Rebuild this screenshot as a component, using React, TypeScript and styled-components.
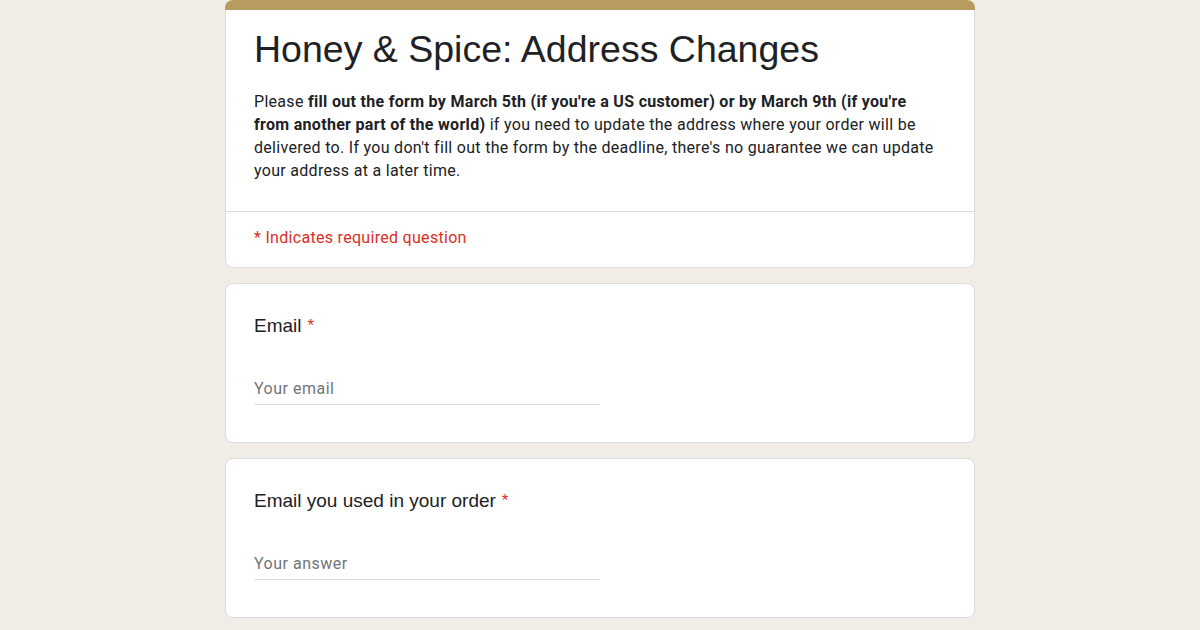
import React from "react";
import styled, { createGlobalStyle } from "styled-components";

const Global = createGlobalStyle`
  html, body { margin: 0; padding: 0; }
  body {
    background: #f1ede6;
    font-family: Roboto, "Liberation Sans", Arial, sans-serif;
    -webkit-font-smoothing: antialiased;
  }
`;

const Page = styled.div`
  width: 750px;
  margin: 0 auto;
  display: flex;
  flex-direction: column;
  gap: 15px;
`;

const Card = styled.section<{ $top?: boolean }>`
  background: #fff;
  border: 1px solid #dadce0;
  border-radius: 8px;
  overflow: hidden;
  ${(p) => (p.$top ? "border-top: none; border-radius: 0 0 8px 8px;" : "")}
`;

const TopBar = styled.div`
  height: 10px;
  background: #b89b5e;
  border-radius: 8px 8px 0 0;
`;

const Header = styled.div`
  padding: 19px 28px 28px 28px;
`;

const Title = styled.h1`
  margin: 0;
  font-family: "Liberation Sans", Arial, sans-serif;
  font-weight: 400;
  font-size: 37.5px;
  line-height: 40px;
  color: #202124;
`;

const Desc = styled.p`
  margin: 20.5px 0 0 0;
  font-family: Roboto, sans-serif;
  font-size: 16px;
  line-height: 23.3px;
  letter-spacing: 0.3px;
  color: #202124;
  b { font-weight: 700; }
`;

const Divider = styled.div`
  height: 1px;
  background: #dadce0;
`;

const Required = styled.div`
  padding: 16px 28px 19px;
  font-family: Roboto, sans-serif;
  font-size: 16px;
  line-height: 20px;
  letter-spacing: 0.3px;
  color: #d93025;
`;

const Question = styled.div`
  padding: 30px 28px 37px;
`;

const Label = styled.div`
  font-family: "Liberation Sans", Arial, sans-serif;
  font-size: 19px;
  line-height: 24px;
  color: #202124;
`;

const Star = styled.span`
  color: #d93025;
  margin-left: 6px;
  font-size: 17px;
  vertical-align: 1px;
`;

const Field = styled.div`
  margin-top: 41px;
  width: 50%;
  border-bottom: 1px solid #e0e0e0;
  padding-bottom: 5px;
  font-family: Roboto, sans-serif;
  font-size: 16px;
  line-height: 20px;
  letter-spacing: 0.5px;
  color: #70757a;
`;

export default function App() {
  return (
    <>
      <Global />
      <Page>
        <div>
          <TopBar />
          <Card $top>
            <Header>
              <Title>Honey &amp; Spice: Address Changes</Title>
              <Desc>
                Please <b>fill out the form by March 5th (if you're a US customer) or by March 9th (if you're from another part of the world)</b> if you need to update the address where your order will be delivered to. If you don't fill out the form by the deadline, there's no guarantee we can update your address at a later time.
              </Desc>
            </Header>
            <Divider />
            <Required>* Indicates required question</Required>
          </Card>
        </div>
        <Card>
          <Question>
            <Label>
              Email<Star>*</Star>
            </Label>
            <Field>Your email</Field>
          </Question>
        </Card>
        <Card>
          <Question>
            <Label>
              Email you used in your order<Star>*</Star>
            </Label>
            <Field>Your answer</Field>
          </Question>
        </Card>
      </Page>
    </>
  );
}
